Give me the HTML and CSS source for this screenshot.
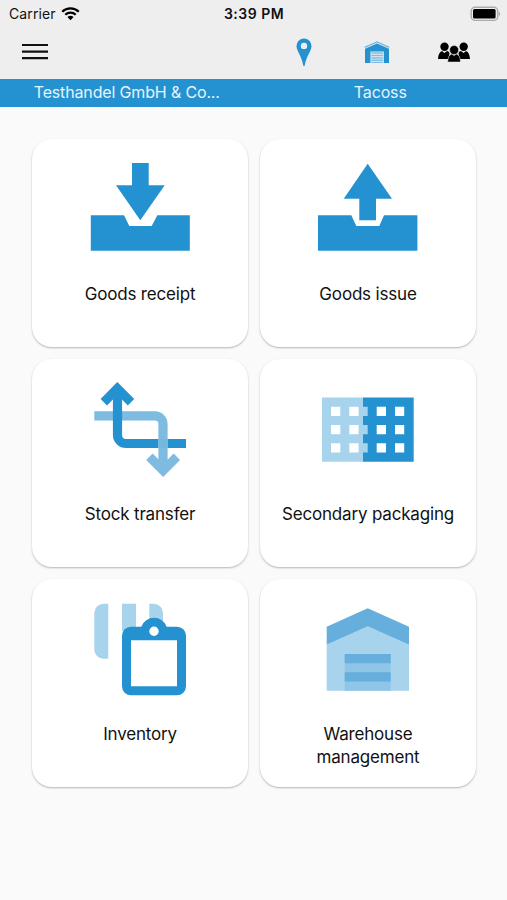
FILE: index.html
```
<!DOCTYPE html>
<html lang="en">
  <head>
    <meta charset="utf-8" />
    <meta name="viewport" content="width=device-width, initial-scale=1" />
    <title>Tacoss</title>
    <link rel="stylesheet" href="styles.css">
  </head>
  <body>
    <header class="header">
      <div class="status-bar">
        <div class="carrier">
          <span>Carrier</span>
          <svg class="wifi" viewBox="0 0 20 15">
            <path d="M1.3 5.6a12.4 12.4 0 0 1 17.4 0M4.5 8.8a7.9 7.9 0 0 1 11 0" />
            <path class="wifi-dot" d="M6.8 11.3a4.6 4.6 0 0 1 6.4 0L10 14.5z" />
          </svg>
        </div>
        <span class="time">3:39 PM</span>
        <svg class="battery" viewBox="0 0 32 16">
          <rect class="battery-frame" x="1.2" y="1.2" width="26.6" height="13.2" rx="4" />
          <rect x="3" y="3" width="22.6" height="9.6" rx="1.5" />
          <path class="battery-cap" d="M28.8 5.2q2.6 2.6 0 5.2z" />
        </svg>
      </div>

      <nav class="toolbar">
        <svg class="menu-icon" viewBox="0 0 26 18">
          <path d="M0 2h26M0 8.700h26M0 15.200h26" />
        </svg>
        <div class="tools">
          <svg class="pin-icon" viewBox="0 0 16 29">
            <path fill-rule="evenodd" d="M8 .5a7.5 7.5 0 0 1 7.5 7.6C15.500 13 11 16.500 8.700 27.500q-.7 1.400-1.400 0C5 16.500 .5 13 .5 8.100A7.500 7.500 0 0 1 8 .5zM8 4.700a3.200 3.200 0 1 0 0 6.400 3.200 3.200 0 0 0 0-6.400z" />
          </svg>
          <svg class="store-icon" viewBox="0 0 26 22">
            <path class="store-roof" d="M.7 6.400 13 1l12.300 5.400" />
            <path d="M1 7.800 13 2.600l12 5.200V22h-5.200V10.500H6.500V22H1z" />
            <path class="store-door" d="M7.300 11.900h11.600M7.300 14.400h11.600M7.300 16.900h11.600M7.300 19.200h11.600M7.300 21.400h11.600" />
          </svg>
          <svg class="people-icon" viewBox="0 0 32 20">
            <circle cx="6.500" cy="4.700" r="4.200" />
            <circle cx="25.700" cy="4.700" r="4.200" />
            <path d="M0 17c.3-4.500 1.500-7 4-8l2.400 2L9 9c1 .2 2 .8 2.500 2L10.500 17zM32 17c-.3-4.500-1.500-7-4-8l-2.400 2L23 9c-1 .2-2 .8-2.500 2l1 6z" />
            <path class="people-front" d="M9.700 20c.2-4.600 1.500-7.200 4-8l2.400 1.600 2.400-1.600c2.500.8 3.800 3.400 4 8z" />
            <circle class="people-front" cx="16.100" cy="8" r="4.500" />
          </svg>
        </div>
      </nav>
    </header>

    <div class="location-bar">
      <span>Testhandel GmbH &amp; Co...</span>
      <span>Tacoss</span>
    </div>

    <main class="grid">
      <a class="card">
        <svg class="card-icon" viewBox="0 0 120 120">
          <path d="M10.800 66.300H44l5.300 10.700h22.400l5.600-10.700h32.500v35.400h-99z" />
          <path d="M52 14h16.700v22.300h16L60.300 71.300 36 36.300h16z" />
        </svg>
        <span class="card-label">Goods receipt</span>
      </a>

      <a class="card">
        <svg class="card-icon" viewBox="0 0 120 120">
          <path d="M10 66.300h33.300l5 10.700h23L76 66.300h33.400v35.400H10z" />
          <path d="M59.700 14.700 84 49.700H68v21.600H51.300V49.700H35.700z" />
        </svg>
        <span class="card-label">Goods issue</span>
      </a>

      <a class="card">
        <svg class="card-icon" viewBox="0 0 120 120">
          <g class="arrow-down">
            <path class="line" d="M14.300 46.800H75a8 8 0 0 1 8 8V98" />
            <path d="m83.200 108-17-17 6.500-6.400 5.900 6h9.200l5.900-6L100 91z" />
          </g>
          <g class="arrow-up">
            <path class="line" d="M37.500 25V66a8.500 8.500 0 0 0 8.500 8.500h32.300M87.700 74.500H106" />
            <path d="m37.300 13 16.900 17-6.400 6.400-5.800-6h-9.100l-5.900 6-6.400-6.400z" />
          </g>
          <path class="crossing" d="M78.300 70h9.400v9h-9.400z" />
        </svg>
        <span class="card-label">Stock transfer</span>
      </a>

      <a class="card">
        <svg class="card-icon" viewBox="0 0 120 120">
          <path class="light" d="M14 28.400h41v64.300H14z" />
          <path d="M55 28.400h50.700v64.300H55z" />
          <path class="light" d="M55 37.700h4.700V47H55zM55 56h4.700v9.300H55zM55 74.300h4.700v9.300H55z" />
          <path class="hole" d="M23 37.700h9.300V47H23zM41.300 37.700h9.300V47h-9.300zM68.700 37.700H78V47h-9.300zM87 37.700h9.200V47H87zM23 56h9.300v9.300H23zM41.300 56h9.300v9.300h-9.300zM68.700 56H78v9.300h-9.300zM87 56h9.200v9.300H87zM23 74.300h9.300v9.300H23zM41.300 74.300h9.300v9.300h-9.300zM68.700 74.300H78v9.300h-9.300zM87 74.300h9.200v9.300H87z" />
        </svg>
        <span class="card-label">Secondary packaging</span>
      </a>

      <a class="card">
        <svg class="card-icon" viewBox="0 0 120 120">
          <path class="light" d="M28.300 14.700v55h-4.800a9.200 9.200 0 0 1-9.200-9.200V23.900a9.200 9.200 0 0 1 9.200-9.200zM42 14.700h14V42H42zM69.300 14.700h4.500a9.200 9.200 0 0 1 9.200 9.200V38H69.300z" />
          <path fill-rule="evenodd" d="M51 37.700h10.300a13.500 13.500 0 0 1 25.400 0H97a9 9 0 0 1 9 9v50.600a9 9 0 0 1-9 9H51a9 9 0 0 1-9-9V46.700a9 9 0 0 1 9-9zM51 51.300v46h46v-46z" />
          <circle class="hole" cx="74" cy="42.200" r="4.700" />
        </svg>
        <span class="card-label">Inventory</span>
      </a>

      <a class="card">
        <svg class="card-icon" viewBox="0 0 120 120">
          <path class="light" d="M18.700 55.700 59.700 37 101 55.700v46H18.700z" />
          <path class="medium" d="M18.700 37.700l41-18.400 41.300 18.400v18L59.700 37.300l-41 18.400z" />
          <path class="shutter" d="M36.700 65h46v36.700h-46z" />
          <path class="medium" d="M36.700 65h46v9.300h-46zM36.700 83.300h46v9.300h-46z" />
        </svg>
        <span class="card-label">Warehouse<br />management</span>
      </a>
    </main>
  </body>
</html>
```
FILE: styles.css
```
html,
body {
  margin: 0;
  padding: 0;
}

body {
  min-height: 900px;
  background: #fafafa;
  color: #111;
  font-family: Inter, "Liberation Sans", sans-serif;
}

svg {
  display: block;
  flex: none;
}

/* Header */

.header {
  height: 79px;
  background: #eee;
}

.status-bar {
  display: grid;
  grid-template-columns: 1fr auto 1fr;
  align-items: center;
  height: 27px;
  padding: 0 5px 1px 9px;
  font-size: 14px;
}

.carrier {
  display: flex;
  align-items: center;
  gap: 5px;
  letter-spacing: 0.1px;
}

.wifi {
  width: 19px;
  height: 15px;
  fill: none;
  stroke: #000;
  stroke-width: 2.4;
}

.wifi-dot {
  fill: #000;
  stroke: none;
}

.time {
  margin-right: 3px;
  font-weight: 600;
  letter-spacing: 0.5px;
}

.battery {
  justify-self: end;
  width: 32px;
  height: 16px;
}

.battery-frame {
  fill: none;
  stroke: #aaa;
  stroke-width: 1.4;
}

.battery-cap {
  fill: #aaa;
}

.toolbar {
  display: flex;
  align-items: center;
  justify-content: space-between;
  height: 48px;
  padding: 0 37px 0 22px;
}

.menu-icon {
  width: 26px;
  height: 18px;
  stroke: #111;
  stroke-width: 2.2;
}

.tools {
  display: flex;
  align-items: center;
}

.pin-icon {
  width: 16px;
  height: 29px;
  margin-right: 52px;
  fill: #2492d1;
}

.store-icon {
  width: 26px;
  height: 22px;
  margin-right: 48px;
  fill: #2492d1;
}

.store-roof {
  fill: none;
  stroke: #72b7df;
  stroke-width: 1.2;
}

.store-door {
  stroke: #7fbde2;
  stroke-width: 1.5;
}

.people-icon {
  width: 32px;
  height: 20px;
}

.people-front {
  stroke: #eee;
  stroke-width: 0.5;
}

/* Location */

.location-bar {
  display: grid;
  grid-template-columns: 1fr 1fr;
  height: 28px;
  background: #2492d1;
  color: #e6f4fc;
  font-size: 16px;
  letter-spacing: -0.15px;
  line-height: 27px;
  text-align: center;
}

/* Cards */

.grid {
  display: grid;
  grid-template-columns: 216px 216px;
  grid-auto-rows: 208px;
  gap: 12px;
  padding: 32px 0 0 32px;
}

.card {
  display: flex;
  flex-direction: column;
  align-items: center;
  box-sizing: border-box;
  padding-top: 10px;
  border-radius: 20px;
  background: #fff;
  box-shadow: 0 1px 2px rgba(0, 0, 0, 0.28);
}

.card-icon {
  width: 120px;
  height: 120px;
  fill: #2492d1;
}

.card-label {
  margin-top: 14px;
  font-size: 17px;
  letter-spacing: -0.18px;
  line-height: 23px;
  text-align: center;
}

.light {
  fill: #a7d3ec;
}

.medium {
  fill: #66afdd;
}

.shutter {
  fill: #8fc6e7;
}

.hole {
  fill: #fff;
}

.line {
  fill: none;
  stroke: #2492d1;
  stroke-width: 9.2;
}

.arrow-down {
  fill: #7dbbe0;
}

.arrow-down .line {
  stroke: #7dbbe0;
}

.crossing {
  fill: #74b7df;
}
```
